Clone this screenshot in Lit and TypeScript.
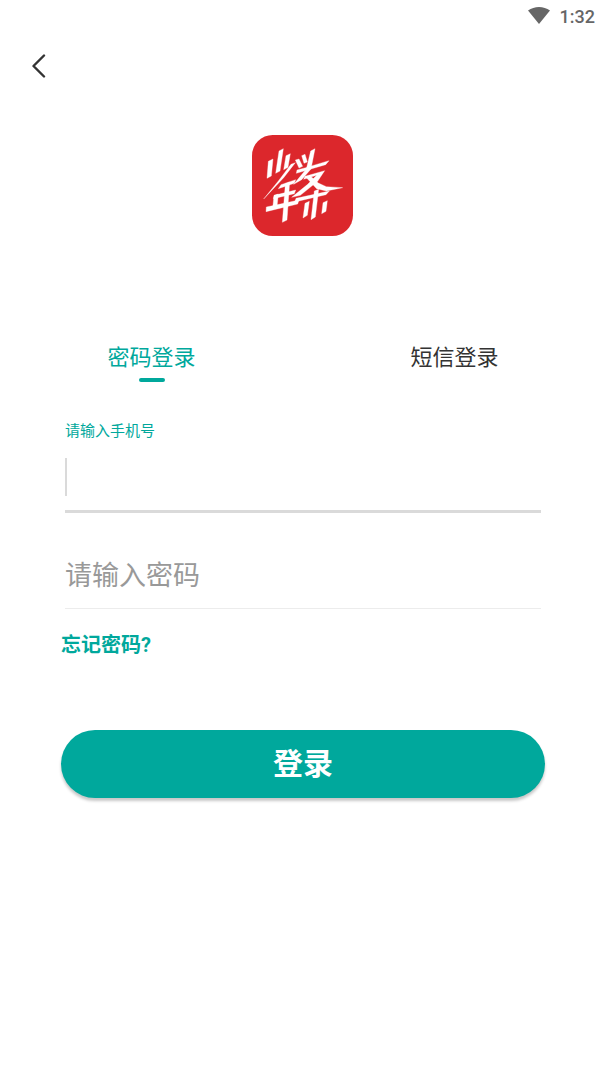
import { LitElement, html, css, svg } from "lit";
import { customElement, state } from "lit/decorators.js";

type Mode = "password" | "sms";

@customElement("app-logo")
class AppLogo extends LitElement {
  static styles = css`
    :host { display: block; width: 101px; height: 101px; }
    .logo { display: block; width: 100%; height: 100%; }
  `;

  render() {
    return html`
      <svg class="logo" viewBox="25 22 303 303" role="img" aria-label="logo">
        <rect x="25" y="22" width="303" height="303" rx="62" fill="#dc272c"></rect>
        ${svg`
          <g fill="#fff" stroke="#fff" stroke-width="1" stroke-linejoin="round">
            <path d="M74 101L88 94L83 145L70 152Z"></path>
            <path d="M106 70L119 63L109 130L96 137Z"></path>
            <path d="M127 84L140 78L133 119L120 126Z"></path>
            <path d="M142 110L155 105L120 150L60 214L104 160Z"></path>
            <path d="M112 171L156 156L152 167L104 183Z"></path>
            <path d="M92 203L156 187L152 198L89 213Z"></path>
            <path d="M91 203L104 199L100 238L87 243Z"></path>
            <path d="M68 238L166 217L162 229L67 252Z"></path>
            <path d="M125 168L138 163L130 277L116 284Z"></path>
            <path d="M155 97L166 94L177 116L166 121Z"></path>
            <path d="M174 84L184 80L191 103L181 107Z"></path>
            <path d="M201 70L214 63L202 124L174 156L150 170L188 124Z"></path>
            <path d="M160 127L186 120L256 99L246 111L158 137Z"></path>
            <path d="M184 146L243 129L222 161L170 203L144 209L192 170L219 143L180 155Z"></path>
            <path d="M187 149L199 144L224 166L248 177L297 180L248 190L219 183Z"></path>
            <path d="M157 212L257 190L247 201L153 223Z"></path>
            <path d="M212 190L225 185L215 268L202 276Z"></path>
            <path d="M184 227L197 221L191 263L178 271Z"></path>
            <path d="M238 225L251 219L247 251L234 258Z"></path>
          </g>`}
      </svg>
    `;
  }
}

@customElement("app-root")
class AppRoot extends LitElement {
  @state() mode: Mode = "password";

  static styles = css`
    :host {
      display: block;
      min-height: 100vh;
      background: #fff;
      color: #333;
      font-family: Roboto, "Noto Sans CJK SC", sans-serif;
    }
    button, input { font: inherit; color: inherit; border: 0; margin: 0; padding: 0; background: none; }
    button { cursor: pointer; }
    .status {
      display: flex; justify-content: flex-end; align-items: center; gap: 10px;
      height: 32px; padding-right: 11px;
      font-size: 18px; font-weight: 500; color: #666;
    }
    .wifi { display: block; width: 22px; height: 18px; }
    .nav { display: flex; padding: 10px 15px; }
    .back { display: flex; align-items: center; justify-content: center; width: 48px; height: 48px; }
    .brand { display: flex; justify-content: center; padding: 35px 2px 0 0; }
    .tabs { display: grid; grid-template-columns: 1fr 1fr; margin-top: 104px; }
    .tab {
      display: flex; flex-direction: column; align-items: center; gap: 3px;
      font-size: 22px; line-height: 35px;
    }
    .tab::after { content: ""; width: 26px; height: 4px; border-radius: 2px; }
    .tab.active { color: #00a89c; }
    .tab.active::after { background: #00a89c; }
    .form { padding: 37px 61px 0; }
    .field { display: flex; flex-direction: column; margin: 0 4px; }
    .label { font-size: 15px; line-height: 24px; color: #00a89c; }
    .entry { display: flex; align-items: center; height: 67px; border-bottom: 3px solid #dadada; }
    .caret { width: 2px; height: 38px; background: #dadada; }
    .input { flex: 1; min-width: 0; height: 48px; font-size: 27px; outline: none; caret-color: #00a89c; }
    .plain { display: grid; height: 65px; padding-top: 30px; border-bottom: 1px solid #ececec; }
    .plain > * { grid-area: 1 / 1; }
    .hint { font-size: 27px; line-height: 40px; color: #999; visibility: hidden; pointer-events: none; }
    .input:placeholder-shown + .hint { visibility: visible; }
    .forgot {
      display: inline-block; margin-top: 21px;
      font-size: 20px; line-height: 30px; font-weight: 700; color: #00a89c; text-decoration: none;
    }
    .submit {
      display: block; width: 100%; height: 68px; margin-top: 70px; border-radius: 34px;
      background: #00a89c; color: #fff; font-size: 30px; line-height: 68px; font-weight: 700;
      box-shadow: 0 3px 3px rgba(0, 0, 0, 0.22);
    }
  `;

  private tab(mode: Mode, text: string) {
    return html`<button
      class="tab ${this.mode === mode ? "active" : ""}"
      type="button" role="tab"
      aria-selected=${this.mode === mode}
      @click=${() => { this.mode = mode; }}
    >${text}</button>`;
  }

  render() {
    return html`
      <div class="status">
        <svg class="wifi" viewBox="0 0 22 18" aria-hidden="true">
          <path d="M0 3.5Q5 0 11 0T22 3.5L11 17Z" fill="#666"></path>
        </svg>
        <span>1:32</span>
      </div>
      <nav class="nav">
        <button class="back" type="button" aria-label="返回">
          <svg width="16" height="24" viewBox="0 0 16 24" aria-hidden="true">
            <path d="M13 1.5L2.5 12L13 22.5" fill="none" stroke="#333" stroke-width="2.4" stroke-linecap="round" stroke-linejoin="round"></path>
          </svg>
        </button>
      </nav>
      <div class="brand"><app-logo></app-logo></div>
      <div class="tabs" role="tablist">
        ${this.tab("password", "密码登录")}
        ${this.tab("sms", "短信登录")}
      </div>
      <form class="form" @submit=${(e: Event) => e.preventDefault()}>
        <div class="field">
          <label class="label" for="phone">请输入手机号</label>
          <div class="entry">
            <span class="caret"></span>
            <input class="input" id="phone" type="tel" autocomplete="off" />
          </div>
        </div>
        <div class="field">
          <div class="entry plain">
            <input class="input" id="password" type="password" placeholder=" " />
            <label class="hint" for="password">请输入密码</label>
          </div>
        </div>
        <a class="forgot" href="#forgot">忘记密码?</a>
        <button class="submit" type="submit">登录</button>
      </form>
    `;
  }
}
